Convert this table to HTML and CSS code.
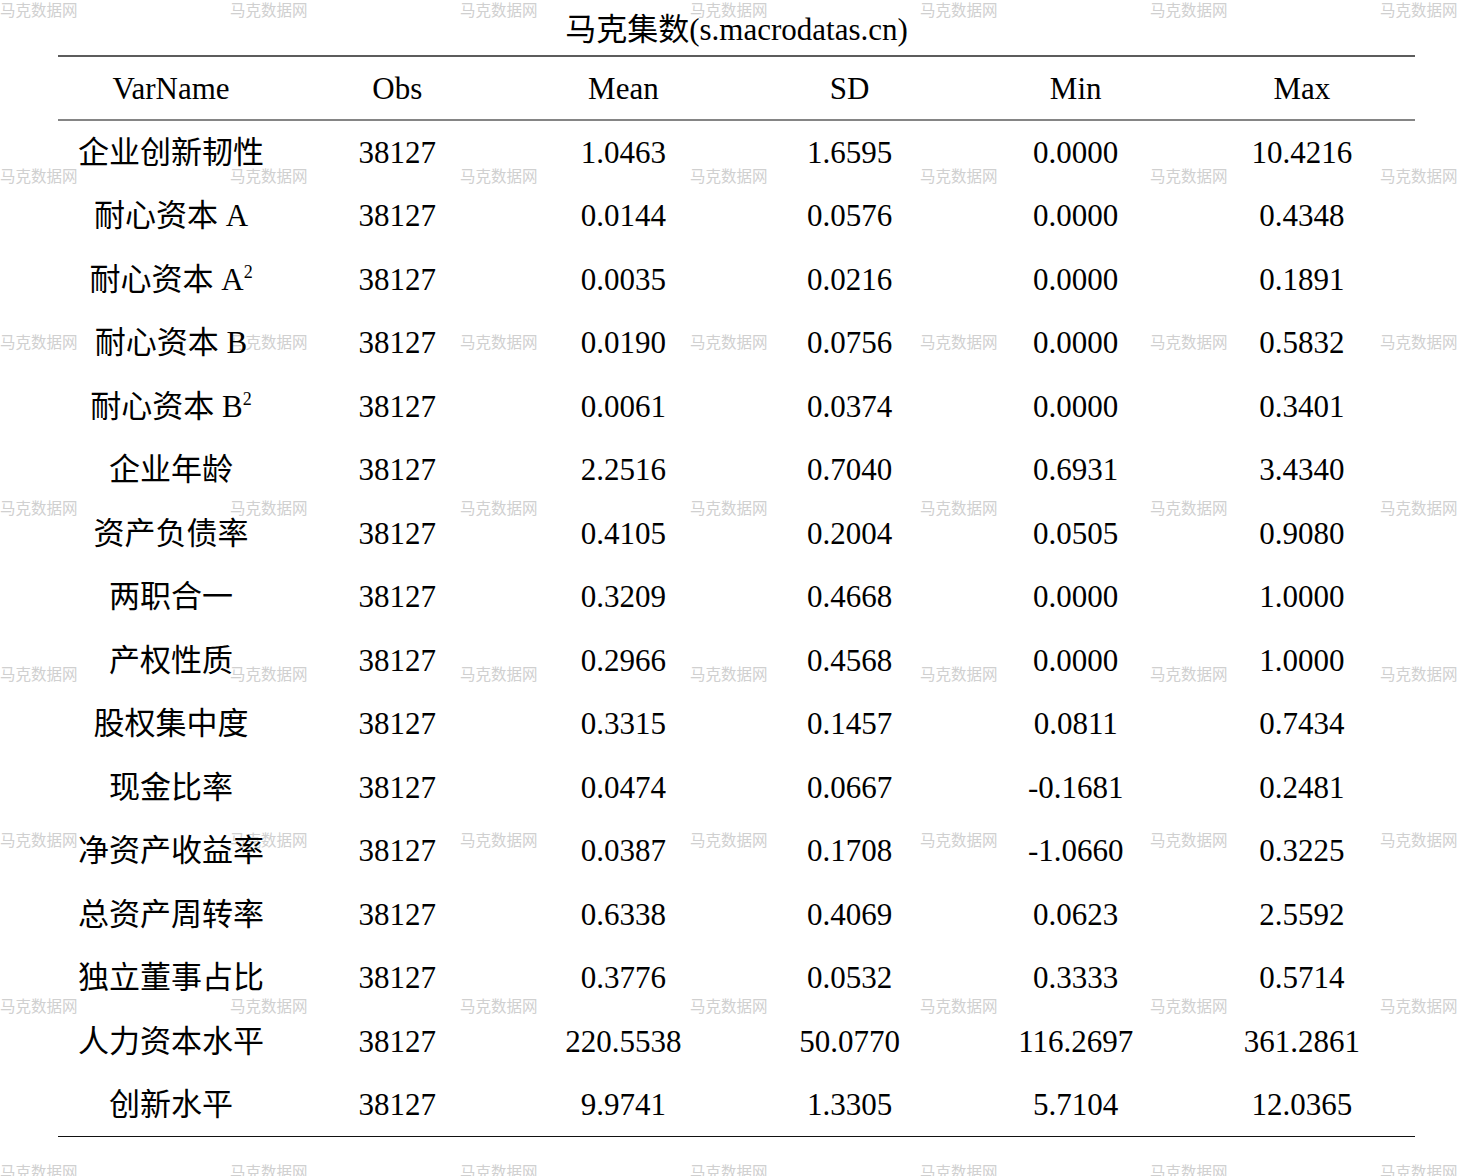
FILE: index.html
```html
<!DOCTYPE html>
<html lang="zh">
<head>
<meta charset="utf-8">
<title>马克集数</title>
<link rel="stylesheet" href="styles.css">
</head>
<body>
<div class="watermarks" aria-hidden="true">
  <span>马克数据网</span><span>马克数据网</span><span>马克数据网</span><span>马克数据网</span><span>马克数据网</span><span>马克数据网</span><span>马克数据网</span>
  <span>马克数据网</span><span>马克数据网</span><span>马克数据网</span><span>马克数据网</span><span>马克数据网</span><span>马克数据网</span><span>马克数据网</span>
  <span>马克数据网</span><span>马克数据网</span><span>马克数据网</span><span>马克数据网</span><span>马克数据网</span><span>马克数据网</span><span>马克数据网</span>
  <span>马克数据网</span><span>马克数据网</span><span>马克数据网</span><span>马克数据网</span><span>马克数据网</span><span>马克数据网</span><span>马克数据网</span>
  <span>马克数据网</span><span>马克数据网</span><span>马克数据网</span><span>马克数据网</span><span>马克数据网</span><span>马克数据网</span><span>马克数据网</span>
  <span>马克数据网</span><span>马克数据网</span><span>马克数据网</span><span>马克数据网</span><span>马克数据网</span><span>马克数据网</span><span>马克数据网</span>
  <span>马克数据网</span><span>马克数据网</span><span>马克数据网</span><span>马克数据网</span><span>马克数据网</span><span>马克数据网</span><span>马克数据网</span>
  <span>马克数据网</span><span>马克数据网</span><span>马克数据网</span><span>马克数据网</span><span>马克数据网</span><span>马克数据网</span><span>马克数据网</span>
</div>
<main class="page">
  <div class="title">马克集数(s.macrodatas.cn)</div>
  <table class="stats">
    <thead>
      <tr><th>VarName</th><th>Obs</th><th>Mean</th><th>SD</th><th>Min</th><th>Max</th></tr>
    </thead>
    <tbody>
      <tr><td>企业创新韧性</td><td>38127</td><td>1.0463</td><td>1.6595</td><td>0.0000</td><td>10.4216</td></tr>
      <tr><td>耐心资本 A</td><td>38127</td><td>0.0144</td><td>0.0576</td><td>0.0000</td><td>0.4348</td></tr>
      <tr><td>耐心资本 A<sup>2</sup></td><td>38127</td><td>0.0035</td><td>0.0216</td><td>0.0000</td><td>0.1891</td></tr>
      <tr><td>耐心资本 B</td><td>38127</td><td>0.0190</td><td>0.0756</td><td>0.0000</td><td>0.5832</td></tr>
      <tr><td>耐心资本 B<sup>2</sup></td><td>38127</td><td>0.0061</td><td>0.0374</td><td>0.0000</td><td>0.3401</td></tr>
      <tr><td>企业年龄</td><td>38127</td><td>2.2516</td><td>0.7040</td><td>0.6931</td><td>3.4340</td></tr>
      <tr><td>资产负债率</td><td>38127</td><td>0.4105</td><td>0.2004</td><td>0.0505</td><td>0.9080</td></tr>
      <tr><td>两职合一</td><td>38127</td><td>0.3209</td><td>0.4668</td><td>0.0000</td><td>1.0000</td></tr>
      <tr><td>产权性质</td><td>38127</td><td>0.2966</td><td>0.4568</td><td>0.0000</td><td>1.0000</td></tr>
      <tr><td>股权集中度</td><td>38127</td><td>0.3315</td><td>0.1457</td><td>0.0811</td><td>0.7434</td></tr>
      <tr><td>现金比率</td><td>38127</td><td>0.0474</td><td>0.0667</td><td>-0.1681</td><td>0.2481</td></tr>
      <tr><td>净资产收益率</td><td>38127</td><td>0.0387</td><td>0.1708</td><td>-1.0660</td><td>0.3225</td></tr>
      <tr><td>总资产周转率</td><td>38127</td><td>0.6338</td><td>0.4069</td><td>0.0623</td><td>2.5592</td></tr>
      <tr><td>独立董事占比</td><td>38127</td><td>0.3776</td><td>0.0532</td><td>0.3333</td><td>0.5714</td></tr>
      <tr><td>人力资本水平</td><td>38127</td><td>220.5538</td><td>50.0770</td><td>116.2697</td><td>361.2861</td></tr>
      <tr><td>创新水平</td><td>38127</td><td>9.9741</td><td>1.3305</td><td>5.7104</td><td>12.0365</td></tr>
    </tbody>
  </table>
</main>
</body>
</html>
```

FILE: styles.css
```css
html, body {
  margin: 0;
  padding: 0;
  background: #ffffff;
}

body {
  width: 1464px;
  height: 1176px;
  overflow: hidden;
  position: relative;
  font-family: "Liberation Serif", "Noto Sans CJK SC", serif;
  color: #000;
}

.watermarks {
  position: absolute;
  top: 0;
  left: 0;
  width: 1464px;
  height: 1176px;
  overflow: hidden;
  display: grid;
  grid-template-columns: repeat(7, 230px);
  grid-auto-rows: 166px;
  z-index: 0;
  pointer-events: none;
}

.watermarks span {
  font-family: "Noto Sans CJK SC", sans-serif;
  font-size: 15.5px;
  line-height: 19px;
  color: #d0d0d0;
  white-space: nowrap;
}

.page {
  position: relative;
  z-index: 1;
  width: 1357px;
  margin-left: 58px;
}

.title {
  height: 57px;
  box-sizing: border-box;
  padding-top: 12px;
  font-size: 31px;
  line-height: 36px;
  text-align: center;
  border-bottom: 2px solid #5c5c5c;
}

.stats {
  width: 100%;
  table-layout: fixed;
  border-collapse: collapse;
  font-size: 31px;
}

.stats th,
.stats td {
  padding: 0;
  text-align: center;
  font-weight: normal;
  white-space: nowrap;
  line-height: 36px;
  vertical-align: middle;
}

.stats thead th {
  height: 63px;
  padding-top: 2px;
  box-sizing: border-box;
  border-bottom: 2px solid #858585;
}

.stats tbody td {
  height: 63.5px;
  padding-top: 2px;
  box-sizing: border-box;
}

.stats tbody tr:last-child td {
  border-bottom: 1.5px solid #111;
}

.stats sup {
  font-size: 18px;
  line-height: 0;
  vertical-align: 0;
  position: relative;
  top: -12px;
}
```
